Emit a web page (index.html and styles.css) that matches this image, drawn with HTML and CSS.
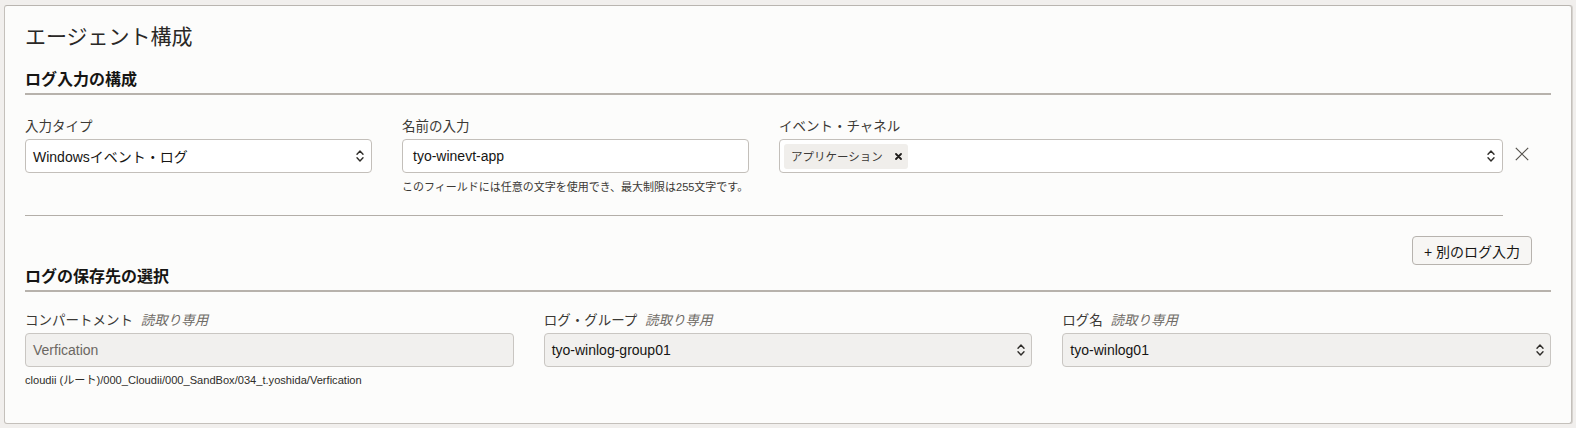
FILE: index.html
```html
<!DOCTYPE html>
<html lang="ja">
<head>
<meta charset="utf-8">
<title>エージェント構成</title>
<link rel="stylesheet" href="styles.css">
</head>
<body>
<div class="card">
  <h1 class="page-title">エージェント構成</h1>

  <h2 class="section-title">ログ入力の構成</h2>
  <div class="input-block">
    <div class="input-row">
      <div class="fields">
        <div class="field">
          <div class="label">入力タイプ</div>
          <div class="control select">
            <span class="value">Windowsイベント・ログ</span>
            <svg class="chev" width="8" height="14" viewBox="0 0 8 14"><path d="M1 5.2 L4 2 L7 5.2 M1 8.8 L4 12 L7 8.8" fill="none" stroke="#2f2d2a" stroke-width="1.4" stroke-linecap="round" stroke-linejoin="round"/></svg>
          </div>
        </div>
        <div class="field">
          <div class="label">名前の入力</div>
          <div class="control text-input">
            <span class="value">tyo-winevt-app</span>
          </div>
          <div class="help">このフィールドには任意の文字を使用でき、最大制限は255文字です。</div>
        </div>
        <div class="field span2">
          <div class="label">イベント・チャネル</div>
          <div class="control select chips">
            <span class="chip">アプリケーション<svg class="chip-x" width="7" height="7" viewBox="0 0 7 7"><path d="M1 1 L6 6 M6 1 L1 6" stroke="#1f1d1b" stroke-width="1.8" stroke-linecap="round"/></svg></span>
            <svg class="chev" width="8" height="14" viewBox="0 0 8 14"><path d="M1 5.2 L4 2 L7 5.2 M1 8.8 L4 12 L7 8.8" fill="none" stroke="#2f2d2a" stroke-width="1.4" stroke-linecap="round" stroke-linejoin="round"/></svg>
          </div>
        </div>
      </div>
      <div class="remove">
        <svg width="14" height="14" viewBox="0 0 14 14"><path d="M0.8 0.8 L13.2 13.2 M13.2 0.8 L0.8 13.2" stroke="#55524d" stroke-width="1.2"/></svg>
      </div>
    </div>
    <div class="divider"></div>
    <div class="actions">
      <button class="btn">+ 別のログ入力</button>
    </div>
  </div>

  <h2 class="section-title second">ログの保存先の選択</h2>
  <div class="dest-grid">
    <div class="field">
      <div class="label">コンパートメント <em class="ro">読取り専用</em></div>
      <div class="control disabled">
        <span class="value muted">Verfication</span>
      </div>
      <div class="path">cloudii (ルート)/000_Cloudii/000_SandBox/034_t.yoshida/Verfication</div>
    </div>
    <div class="field">
      <div class="label">ログ・グループ <em class="ro">読取り専用</em></div>
      <div class="control select disabled">
        <span class="value">tyo-winlog-group01</span>
        <svg class="chev" width="8" height="14" viewBox="0 0 8 14"><path d="M1 5.2 L4 2 L7 5.2 M1 8.8 L4 12 L7 8.8" fill="none" stroke="#2f2d2a" stroke-width="1.4" stroke-linecap="round" stroke-linejoin="round"/></svg>
      </div>
    </div>
    <div class="field">
      <div class="label">ログ名 <em class="ro">読取り専用</em></div>
      <div class="control select disabled">
        <span class="value">tyo-winlog01</span>
        <svg class="chev" width="8" height="14" viewBox="0 0 8 14"><path d="M1 5.2 L4 2 L7 5.2 M1 8.8 L4 12 L7 8.8" fill="none" stroke="#2f2d2a" stroke-width="1.4" stroke-linecap="round" stroke-linejoin="round"/></svg>
      </div>
    </div>
  </div>
</div>
</body>
</html>
```

FILE: styles.css
```css
* { box-sizing: border-box; }

html, body {
  margin: 0;
  padding: 0;
  background: #f1efed;
  height: 428px;
  overflow: hidden;
}

body {
  font-family: "Liberation Sans", "Noto Sans CJK JP", sans-serif;
  color: #161513;
}

.card {
  margin: 5px 4px 0;
  background: #fcfcfb;
  border: 1px solid #c4c0bb;
  border-top-color: #b9b5b0;
  border-radius: 3px;
  box-shadow: 1px 0 0 #d6d3cf;
  padding: 17px 20px 35px;
}

.page-title {
  margin: 0;
  font-size: 21px;
  line-height: 28px;
  font-weight: 400;
  color: #2a2826;
}

.section-title {
  margin: 18px 0 0;
  font-size: 16px;
  line-height: 22px;
  font-weight: 700;
  color: #161513;
  padding-bottom: 2px;
  border-bottom: 2px solid #b7b2ac;
}

.section-title.second {
  margin-top: 1px;
}

.input-block {
  padding-right: 19px;
}

.input-row {
  display: flex;
  margin-top: 22px;
}

.fields {
  flex: 1;
  display: grid;
  grid-template-columns: repeat(4, 1fr);
  column-gap: 30px;
}

.span2 {
  grid-column: span 2;
}

.field {
  display: flex;
  flex-direction: column;
  min-width: 0;
}

.label {
  font-size: 13.5px;
  line-height: 20px;
  color: #3b3935;
  margin-bottom: 2px;
  white-space: nowrap;
}

.ro {
  font-style: italic;
  color: #6f6b66;
  margin-left: 4px;
}

.control {
  height: 34px;
  border: 1px solid #c3bfba;
  border-radius: 4px;
  background: #ffffff;
  display: flex;
  align-items: center;
  font-size: 14px;
  color: #161513;
}

.select {
  padding: 0 7px 0 7px;
  justify-content: space-between;
}

.text-input {
  padding: 0 10px;
}

.disabled {
  background: #f1f0ee;
  border-color: #c9c6c2;
}

.disabled:not(.select) {
  padding: 0 7px;
}

.disabled.select {
  padding-right: 6px;
}

.muted {
  color: #6b6762;
}

.value {
  white-space: nowrap;
}

.chev {
  flex: none;
}

.chips {
  padding-left: 4px;
}

.chip {
  display: inline-flex;
  align-items: center;
  height: 25px;
  padding: 0 6px 0 7px;
  background: #f0eeeb;
  border-radius: 3px;
  font-size: 11.5px;
  color: #3c3a37;
  gap: 12px;
}

.chip-x {
  flex: none;
}

.help {
  margin-top: 6px;
  font-size: 11px;
  line-height: 16px;
  color: #3b3935;
  white-space: nowrap;
}

.remove {
  width: 29px;
  flex: none;
  display: flex;
  padding-top: 30px;
  padding-left: 12px;
}

.divider {
  margin-top: 20px;
  margin-right: 29px;
  height: 1px;
  background: #b3aea8;
}

.actions {
  margin-top: 20px;
  display: flex;
  justify-content: flex-end;
}

.btn {
  height: 29px;
  padding: 0 11px;
  border: 1px solid #b7b3ae;
  border-radius: 4px;
  background: #f7f6f4;
  font-family: "Liberation Sans", "Noto Sans CJK JP", sans-serif;
  font-size: 14px;
  color: #161513;
}

.dest-grid {
  margin-top: 19px;
  display: grid;
  grid-template-columns: repeat(3, 1fr);
  column-gap: 30px;
}

.path {
  margin-top: 5px;
  font-size: 11.1px;
  line-height: 16px;
  color: #2e2c29;
  white-space: nowrap;
}
```
